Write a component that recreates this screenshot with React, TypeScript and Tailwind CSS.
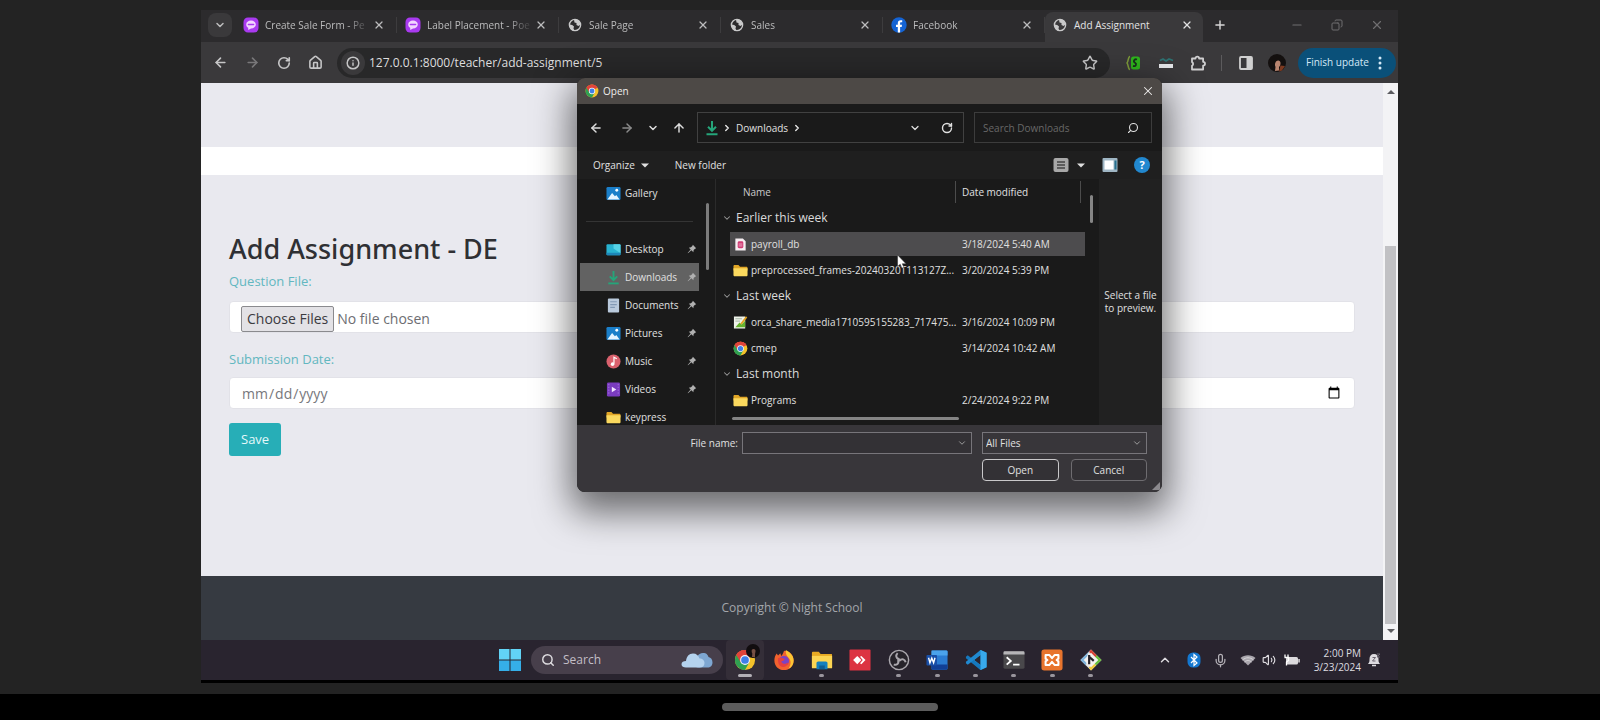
import React from "react";
import {
  ArrowLeft,
  ArrowRight,
  ArrowUp,
  ChevronDown,
  ChevronRight,
  ChevronUp,
  Copy,
  House,
  Info,
  Mic,
  Minus,
  Plus,
  RotateCw,
  Search,
  Star,
  Volume2,
  X,
} from "lucide-react";

type IconProps = { className?: string };

function ChromeIcon({ className }: IconProps) {
  return (
    <svg viewBox="0 0 24 24" className={className} aria-hidden="true">
      <circle cx="12" cy="12" r="11" fill="#f4c22b" />
      <path d="M12 12 L2.5 6.5 A11 11 0 0 1 21.5 6.5 Z" fill="#e0443a" />
      <path d="M2.5 6.5 A11 11 0 0 0 12 23 L16.6 14.6 L12 12 Z" fill="#2fa152" />
      <path d="M12 6.8 H21.6 A11 11 0 0 0 2.5 6.5 L7.4 14.6 Z" fill="#e0443a" />
      <circle cx="12" cy="12" r="5.4" fill="#f3f5fa" />
      <circle cx="12" cy="12" r="4.2" fill="#3f7fe8" />
    </svg>
  );
}

function ChatIcon({ className }: IconProps) {
  return (
    <svg viewBox="0 0 16 16" className={className} aria-hidden="true">
      <rect x="0.5" y="0.5" width="15" height="15" rx="4.5" fill="#a93af0" />
      <path d="M8 3.6c2.8 0 4.8 1.7 4.8 3.9S10.8 11.5 8 11.5L5.2 13v-2.2C3.9 10.1 3.2 8.9 3.2 7.5 3.2 5.3 5.2 3.6 8 3.6Z" fill="#f3d5ff" />
      <path d="M5.4 7.5h5.2" stroke="#a93af0" strokeWidth="1.4" strokeLinecap="round" />
    </svg>
  );
}

function GlobeIcon({ className }: IconProps) {
  return (
    <svg viewBox="0 0 16 16" className={className} aria-hidden="true">
      <circle cx="8" cy="8" r="5.6" fill="none" stroke="#c9c9ca" strokeWidth="1.4" />
      <path d="M2.500 7.500 5.200 8l1.800 1.500L6.500 11.500l.8 2C4.500 13.500 2.500 11 2.500 7.500Z" fill="#c9c9ca" />
      <path d="M7 2.500h3c2 1 3.300 2.800 3.500 5L11.500 9 9.500 8V6L7.500 5.500 7 2.500Z" fill="#c9c9ca" />
    </svg>
  );
}

function FacebookIcon({ className }: IconProps) {
  return (
    <svg viewBox="0 0 16 16" className={className} aria-hidden="true">
      <circle cx="8" cy="8" r="7.7" fill="#1463d3" />
      <path d="M6.8 15.6V10H5V7.8h1.8V6.2c0-2 1-3 2.9-3h1.5v2.1h-1c-.8 0-1.1.3-1.1 1v1.5H11L10.7 10H9.1v5.6Z" fill="#fff" />
    </svg>
  );
}

function DownloadIcon({ className }: IconProps) {
  return (
    <svg viewBox="0 0 16 16" className={className} fill="none" stroke="#25a57a" strokeWidth="2" aria-hidden="true">
      <path d="M8 1v9.5M4 6.800l4 4 4-4" />
      <path d="M2.5 14.3h11" />
    </svg>
  );
}

function FolderIcon({ className }: IconProps) {
  return (
    <svg viewBox="0 0 16 16" className={className} aria-hidden="true">
      <path d="M0.5 3.5c0-.8.5-1.3 1.3-1.3h4L7.5 4h6.7c.8 0 1.3.5 1.3 1.3V8h-15Z" fill="#e0a526" />
      <path d="M0.5 5.6h15v7.1c0 .8-.5 1.3-1.3 1.3H1.8c-.8 0-1.3-.5-1.3-1.3Z" fill="#fbd95e" />
    </svg>
  );
}

function PictureIcon({ className }: IconProps) {
  return (
    <svg viewBox="0 0 16 16" className={className} aria-hidden="true">
      <rect x="0.5" y="1" width="15" height="14" rx="1.5" fill="#1b7fc9" />
      <path d="M1.5 14.5 6.5 7.5l3 3.5 1.5-1.5 3.5 5Z" fill="#e6f4ff" />
      <circle cx="11.5" cy="4.5" r="1.5" fill="#fff" />
    </svg>
  );
}

function DesktopIcon({ className }: IconProps) {
  return (
    <svg viewBox="0 0 16 16" className={className} aria-hidden="true">
      <rect x="0.5" y="2.5" width="15" height="11.5" rx="1" fill="#28b3d1" />
      <path d="M8 2.5h6.5a1 1 0 0 1 1 1V12L8 7Z" fill="#56d3e6" />
      <path d="M0.5 11.5h15V13a1 1 0 0 1-1 1h-13a1 1 0 0 1-1-1Z" fill="#1d86b8" />
    </svg>
  );
}

function DocumentIcon({ className }: IconProps) {
  return (
    <svg viewBox="0 0 16 16" className={className} aria-hidden="true">
      <rect x="2" y="0.5" width="12" height="15" rx="1" fill="#b9c9dc" />
      <path d="M4.5 4h7M4.5 7h7M4.5 10h5" stroke="#8299b5" strokeWidth="1.2" />
    </svg>
  );
}

function MusicIcon({ className }: IconProps) {
  return (
    <svg viewBox="0 0 16 16" className={className} aria-hidden="true">
      <circle cx="8" cy="8" r="7.5" fill="#d9616d" />
      <path d="M8.5 10.5V3.5l3 1.5" fill="none" stroke="#fff" strokeWidth="1.3" />
      <circle cx="7" cy="10.8" r="1.9" fill="#fff" />
    </svg>
  );
}

function VideoIcon({ className }: IconProps) {
  return (
    <svg viewBox="0 0 16 16" className={className} aria-hidden="true">
      <rect x="1" y="0.5" width="14" height="15" rx="1.5" fill="#7a3bbf" />
      <path d="M3 2v12M13 2v12" stroke="#a676df" strokeWidth="1" strokeDasharray="1.5 1.5" />
      <path d="M6.2 5v6l4.8-3Z" fill="#f0e2ff" />
    </svg>
  );
}

function PinIcon({ className }: IconProps) {
  return (
    <svg viewBox="0 0 12 12" className={className} aria-hidden="true">
      <path d="M7 1 11 5 9.7 5.6 8 7.3 7.6 9.8 5.3 7.6 1.2 11.2.8 10.8 4.4 6.7 2.2 4.4 4.7 4 6.4 2.3Z" fill="#b0b0b0" />
    </svg>
  );
}

function DatabaseFileIcon({ className }: IconProps) {
  return (
    <svg viewBox="0 0 16 16" className={className} aria-hidden="true">
      <path d="M2.500 1.500h8l3 3v10h-11Z" fill="#f6eef2" />
      <rect x="5" y="4.500" width="6" height="7.500" rx="1.5" fill="#cf3b73" />
      <path d="M6 7.5h4M6 9.5h4" stroke="#f6c4d8" strokeWidth="0.8" />
    </svg>
  );
}

function ImageFileIcon({ className }: IconProps) {
  return (
    <svg viewBox="0 0 16 16" className={className} aria-hidden="true">
      <path d="M1 1.5h12v13H1Z" fill="#eff3ea" />
      <path d="M2.5 4h7M2.5 6.5h5" stroke="#9fb0a0" strokeWidth="1" />
      <path d="M2.5 13 7 8l2 2 4-4v7Z" fill="#65b32e" />
      <path d="m8.5 9.5 6-7.5" stroke="#e2a11d" strokeWidth="1.8" />
    </svg>
  );
}

function Caret({ className }: IconProps) {
  return (
    <svg viewBox="0 0 8 5" className={className} aria-hidden="true">
      <path d="M0 .5h8L4 4.5Z" fill="currentColor" />
    </svg>
  );
}

const tabs = [
  { title: "Create Sale Form - Pe", Icon: ChatIcon },
  { title: "Label Placement - Poe", Icon: ChatIcon },
  { title: "Sale Page", Icon: GlobeIcon },
  { title: "Sales", Icon: GlobeIcon },
  { title: "Facebook", Icon: FacebookIcon },
];

function TabBar() {
  return (
    <div className="flex h-8 items-center bg-[#2c2b2d] pb-0.5 text-[#bcbcbd]">
      <button aria-label="Search tabs" className="ml-[7px] mr-[3px] grid h-6 w-6 place-items-center rounded-lg bg-[#3a393b]">
        <ChevronDown className="h-3 w-3" strokeWidth={3} />
      </button>
      {tabs.map(({ title, Icon }) => (
        <div key={title} className="flex h-4 w-[162px] shrink-0 items-center border-r border-[#3d3c3e] pl-2 pr-[11px]">
          <Icon className="h-4 w-4 shrink-0" />
          <span className="ml-1.5 whitespace-nowrap text-[10px] leading-4 [mask-image:linear-gradient(to_right,black_80px,transparent_106px)]">
            {title}
          </span>
          <button aria-label={`Close ${title}`} className="ml-auto">
            <X className="h-3 w-3" strokeWidth={2.500} />
          </button>
        </div>
      ))}
      <div className="-mb-0.5 flex h-[30px] w-[158px] shrink-0 items-center self-end rounded-t-lg bg-[#3a393b] pb-1 pl-[7px] pr-2.5 text-[#e2e2e3]">
        <GlobeIcon className="h-4 w-4" />
        <span className="ml-1.5 whitespace-nowrap text-[10px] leading-4">Add Assignment</span>
        <button aria-label="Close Add Assignment" className="ml-auto">
          <X className="h-3 w-3" strokeWidth={2.500} />
        </button>
      </div>
      <button aria-label="New tab" className="ml-2.5 text-[#d6d6d6]">
        <Plus className="h-3.5 w-3.5" strokeWidth={2.500} />
      </button>
      <div className="ml-auto mr-3.5 flex gap-[26px] text-[#6f6e70]">
        <button aria-label="Minimize">
          <Minus className="h-3.5 w-3.5" />
        </button>
        <button aria-label="Restore">
          <Copy className="h-3 w-3.5 -scale-x-100" />
        </button>
        <button aria-label="Close window">
          <X className="h-3.5 w-3.5" />
        </button>
      </div>
    </div>
  );
}

function Toolbar() {
  return (
    <div className="flex h-[41px] items-center bg-[#3a393b] pl-3 pr-0.5 text-[#c6c6c7]">
      <div className="flex gap-[17px]">
        <button aria-label="Back"><ArrowLeft className="h-[15px] w-[15px]" strokeWidth={2.500} /></button>
        <button aria-label="Forward" className="text-[#79787a]"><ArrowRight className="h-[15px] w-[15px]" strokeWidth={2.500} /></button>
        <button aria-label="Reload"><RotateCw className="h-3.5 w-3.5" strokeWidth={2.800} /></button>
        <button aria-label="Home"><House className="h-[15px] w-[15px]" strokeWidth={2.500} /></button>
      </div>
      <div className="ml-3.5 flex h-[30px] min-w-0 flex-1 items-center rounded-full bg-[#282829] pl-1 pr-3">
        <span className="grid h-6 w-6 shrink-0 place-items-center rounded-full bg-[#3a393b]">
          <Info className="h-3.5 w-3.5" strokeWidth={2.500} />
        </span>
        <input
          aria-label="Address"
          defaultValue="127.0.0.1:8000/teacher/add-assignment/5"
          className="ml-1 min-w-0 flex-1 bg-transparent text-[12px] text-[#dededf] outline-none"
        />
        <Star className="h-4 w-4" strokeWidth={2.200} />
      </div>
      <div className="ml-4 flex items-center">
        <svg viewBox="0 0 16 16" className="h-4 w-4" aria-hidden="true">
          <path d="M4 1.5C2 1.5 2.5 6.5 1 8c1.5 1.5 1 6.5 3 6.5" fill="none" stroke="#7d9a3a" strokeWidth="1.5" />
          <rect x="5" y="1.5" width="9" height="13" rx="2.5" fill="#2eb51c" />
          <path d="M11 4.5c-3-1-4 2-2 3.2s1 4-2 3.3" fill="none" stroke="#17301a" strokeWidth="1.8" />
        </svg>
        <svg viewBox="0 0 16 16" className="ml-4 h-4 w-4" aria-hidden="true">
          <path d="M2 5.500 5 4l3 2 3-2 4 1.500" fill="none" stroke="#2d7272" strokeWidth="1.8" />
          <rect x="1" y="9" width="14" height="4" fill="#e5e7ea" />
        </svg>
        <svg viewBox="0 0 16 16" className="ml-4 h-4 w-4" fill="none" stroke="#cfcfd0" strokeWidth="1.800" strokeLinejoin="round" aria-hidden="true">
          <path d="M2 3.500h3.500a1.800 1.800 0 0 1 3.600 0h4v3.300a1.900 1.900 0 0 1 0 3.800v3.900H2v-3.800a2 2 0 0 0 0-3.600Z" />
        </svg>
        <span className="ml-[15px] h-4 w-px bg-[#5c5b5d]" />
        <svg viewBox="0 0 16 16" className="ml-4 h-4 w-4" aria-hidden="true">
          <rect x="2" y="2" width="12" height="12" rx="1" fill="none" stroke="#d0d0d0" strokeWidth="1.8" />
          <rect x="8.5" y="2" width="5.5" height="12" fill="#d0d0d0" />
        </svg>
        <svg viewBox="0 0 18 18" className="ml-3.5 h-[18px] w-[18px]" aria-hidden="true">
          <circle cx="9" cy="9" r="9" fill="#14100f" />
          <path d="M8 7.500c2-2 4.500-1 4.500 1.500 0 2-.5 3-1.500 4v3.500L7 17l.5-4C6.500 11 7 9 8 7.500Z" fill="#b98570" />
          <path d="M12.5 11.500 17 12 14 16.5 11 17.500Z" fill="#7e3a20" />
        </svg>
      </div>
      <button className="ml-3 flex h-[30px] w-[98px] shrink-0 items-center justify-between rounded-full bg-[#0a5079] pl-2 pr-3.5 text-[10px] text-[#d5e9f7]">
        <span className="whitespace-nowrap">Finish update</span>
        <svg viewBox="0 0 4 14" className="h-3.5 w-1" fill="currentColor" aria-hidden="true">
          <circle cx="2" cy="2" r="1.5" /><circle cx="2" cy="7" r="1.5" /><circle cx="2" cy="12" r="1.5" />
        </svg>
      </button>
    </div>
  );
}

function AssignmentPage() {
  return (
    <div className="flex h-[557px] bg-[#e9e9ef]">
      <div className="flex min-w-0 flex-1 flex-col">
        <div className="mt-16 h-7 bg-white" />
        <form className="px-7 pt-14" onSubmit={(e) => e.preventDefault()}>
          <h1 className="font-['Noto_Sans','Open_Sans',sans-serif] text-[27px] font-medium leading-9 text-[#2f3034]">Add Assignment - DE</h1>
          <label htmlFor="question" className="mt-1 block text-[13px] leading-5 text-[#62b7c0]">Question File:</label>
          <input
            id="question"
            type="file"
            multiple
            className="mt-2.5 block h-8 w-full rounded-sm border border-[#e2e2e8] bg-white pl-[11px] pt-1 text-[14px] leading-5 text-[#6d6d72] file:mr-[3px] file:h-[26px] file:rounded-xs file:border file:border-solid file:border-[#8a8a8e] file:bg-[#e3e2e6] file:px-[5px] file:text-[14px] file:text-[#3b3b3f]"
          />
          <label htmlFor="date" className="mt-4 block text-[13px] leading-5 text-[#62b7c0]">Submission Date:</label>
          <input
            id="date"
            type="date"
            className="mt-2 block h-8 w-full rounded-sm border border-[#e2e2e8] bg-white px-[11px] text-[14px] text-[#77777c]"
          />
          <button className="mt-3.5 h-[33px] rounded-[3px] bg-[#27aeb7] px-3 text-[13px] text-[#e4f8fa]">Save</button>
        </form>
        <footer className="mt-auto grid h-16 place-items-center bg-[#363a41] text-[12px] text-[#a3a6ab]">
          Copyright © Night School
        </footer>
      </div>
      <div className="flex w-[15px] flex-col items-center bg-[#f3f3f5] py-1.5 text-[#5c5c60]">
        <Caret className="h-1.5 w-2 rotate-180" />
        <div className="mt-auto h-[378px] w-[11px] bg-[#c1c1c4]" />
        <Caret className="mt-1 h-1.5 w-2" />
      </div>
    </div>
  );
}

const places = [
  { name: "Desktop", Icon: DesktopIcon, pinned: true },
  { name: "Downloads", Icon: DownloadIcon, pinned: true, active: true },
  { name: "Documents", Icon: DocumentIcon, pinned: true },
  { name: "Pictures", Icon: PictureIcon, pinned: true },
  { name: "Music", Icon: MusicIcon, pinned: true },
  { name: "Videos", Icon: VideoIcon, pinned: true },
  { name: "keypress", Icon: FolderIcon, pinned: false },
];

const groups = [
  {
    title: "Earlier this week",
    files: [
      { name: "payroll_db", date: "3/18/2024 5:40 AM", Icon: DatabaseFileIcon, active: true },
      { name: "preprocessed_frames-20240320T113127Z...", date: "3/20/2024 5:39 PM", Icon: FolderIcon },
    ],
  },
  {
    title: "Last week",
    files: [
      { name: "orca_share_media1710595155283_717475...", date: "3/16/2024 10:09 PM", Icon: ImageFileIcon },
      { name: "cmep", date: "3/14/2024 10:42 AM", Icon: ChromeIcon },
    ],
  },
  { title: "Last month", files: [{ name: "Programs", date: "2/24/2024 9:22 PM", Icon: FolderIcon }] },
];

function OpenDialog() {
  return (
    <div
      role="dialog"
      aria-label="Open"
      className="absolute left-[376px] top-[68px] w-[585px] overflow-hidden rounded-lg bg-[#1a1a1a] text-[10px] leading-[14px] text-[#e0e0e0] shadow-[0_14px_36px_6px_rgba(0,0,0,0.55)]"
    >
      <div className="flex h-[26px] items-center bg-[#4d4946] pl-2 pr-[7px] text-[#efedec]">
        <ChromeIcon className="h-3.5 w-3.5" />
        <span className="ml-1">Open</span>
        <button aria-label="Close" className="ml-auto"><X className="h-3.5 w-3.5" strokeWidth={1.800} /></button>
      </div>

      <div className="flex h-[47px] items-center pl-3 pr-2.5">
        <div className="flex w-[108px] items-center gap-[13px] text-[#dcdcdc]">
          <button aria-label="Back" className="mr-1"><ArrowLeft className="h-3.5 w-3.5" strokeWidth={2.500} /></button>
          <button aria-label="Forward" className="text-[#8b8b8b]"><ArrowRight className="h-3.5 w-3.5" strokeWidth={2.500} /></button>
          <button aria-label="Recent"><ChevronDown className="h-3 w-3" strokeWidth={3} /></button>
          <button aria-label="Up"><ArrowUp className="h-3.5 w-3.5" strokeWidth={2.500} /></button>
        </div>
        <div className="flex h-[31px] w-[267px] items-center border border-[#414141] pl-1.5 pr-2.5">
          <DownloadIcon className="h-4 w-4" />
          <ChevronRight className="ml-0.5 h-2.5 w-2.5" strokeWidth={3.500} />
          <span className="ml-1">Downloads</span>
          <ChevronRight className="ml-1 h-2.5 w-2.5" strokeWidth={3.500} />
          <button aria-label="Previous locations" className="ml-auto"><ChevronDown className="h-3 w-3" strokeWidth={2.500} /></button>
          <button aria-label="Refresh" className="ml-5"><RotateCw className="h-3 w-3" strokeWidth={2.800} /></button>
        </div>
        <div className="ml-2.5 flex h-[31px] min-w-0 flex-1 items-center border border-[#3c3c3c] px-2">
          <input aria-label="Search Downloads" placeholder="Search Downloads" className="min-w-0 flex-1 bg-transparent outline-none placeholder:text-[#686868]" />
          <Search className="mr-1 h-3 w-3 -scale-x-100" strokeWidth={2.200} />
        </div>
      </div>

      <div className="flex h-7 items-center bg-[#1f1f1f] px-4">
        <button className="flex items-center gap-1.5">Organize<Caret className="h-[5px] w-2" /></button>
        <button className="ml-[26px]">New folder</button>
        <button aria-label="Change view" className="ml-auto flex items-center gap-2">
          <svg viewBox="0 0 16 16" className="h-4 w-4" aria-hidden="true">
            <rect x="0.5" y="1" width="15" height="14" rx="2" fill="#a8a8a8" />
            <path d="M4 5h8M4 8h8M4 11h8" stroke="#444" strokeWidth="1.3" />
          </svg>
          <Caret className="h-[5px] w-2" />
        </button>
        <button aria-label="Preview pane" className="ml-[17px]">
          <svg viewBox="0 0 16 16" className="h-4 w-4" aria-hidden="true">
            <rect x="0.5" y="1" width="15" height="14" rx="1" fill="#9fb6c4" />
            <rect x="2.5" y="3.5" width="9" height="9" fill="#fff" />
            <path d="M13.5 3.5v9" stroke="#27708e" strokeWidth="2" />
          </svg>
        </button>
        <button aria-label="Help" className="-mr-1 ml-4 grid h-4 w-4 place-items-center rounded-full bg-[#2288cf] text-[11px] font-bold text-white">?</button>
      </div>

      <div className="flex h-[246px]">
        <div className="flex w-[139px] shrink-0 overflow-hidden border-r border-[#2b2b2b] pl-[3px]">
          <ul className="w-[119px]">
            <li className="flex h-7 items-center pl-[26px]"><PictureIcon className="mr-1 h-[15px] w-[15px]" />Gallery</li>
            <li className="mx-1.5 mb-[13px] mt-3.5 h-px bg-[#343434]" role="separator" />
            {places.map(({ name, Icon, pinned, active }) => (
              <li key={name} className={active ? "flex h-7 items-center bg-[#626262] pl-[26px] pr-0.5" : "flex h-7 items-center pl-[26px] pr-0.5"}>
                <Icon className="mr-1 h-[15px] w-[15px] shrink-0" />
                {name}
                {pinned && <PinIcon className="ml-auto h-2.5 w-2.5 shrink-0" />}
              </li>
            ))}
          </ul>
          <div className="ml-[7px] mt-6 h-[67px] w-[3px] rounded-full bg-[#7c7c7c]" />
        </div>

        <div className="flex min-w-0 flex-1 flex-col pl-1.5">
          <table className="w-[363px] table-fixed border-collapse">
            <colgroup>
              <col className="w-[233px]" />
              <col className="w-[130px]" />
            </colgroup>
            <thead>
              <tr className="h-[26px] text-left">
                <th className="py-0 pl-[21px] pr-0 font-normal text-[#cacaca]">Name</th>
                <th className="p-0 font-normal">
                  <div className="mr-1 h-[22px] border-x border-[#4c4c4c] pl-1.5 pt-1">Date modified</div>
                </th>
              </tr>
            </thead>
            {groups.map((group) => (
              <tbody key={group.title}>
                <tr className="h-[26px]">
                  <th colSpan={2} className="p-0 text-left text-[12px] font-normal leading-5 text-[#dadada]">
                    <span className="flex items-center gap-1"><ChevronDown className="h-2.5 w-2.5 text-[#9b9b9b]" strokeWidth={2.500} />{group.title}</span>
                  </th>
                </tr>
                {group.files.map(({ name, date, Icon, active }) => (
                  <tr key={name} className="h-[26px]">
                    <td className="p-0 pl-2">
                      <div className={active ? "flex h-6 items-center bg-[#4d4c4e] pl-[3px]" : "flex h-6 items-center pl-[3px]"}>
                        <Icon className="mr-[3px] h-[15px] w-[15px] shrink-0" />
                        <span className="whitespace-nowrap">{name}</span>
                      </div>
                    </td>
                    <td className="p-0">
                      <div className={active ? "flex h-6 items-center whitespace-nowrap bg-[#4d4c4e] pl-[7px]" : "flex h-6 items-center whitespace-nowrap pl-[7px]"}>{date}</div>
                    </td>
                  </tr>
                ))}
              </tbody>
            ))}
          </table>
          <div className="ml-2.5 mt-1 h-[3px] w-[227px] rounded-full bg-[#858585]" />
        </div>
        <div className="mr-1.5 mt-4 h-7 w-[3px] rounded-full bg-[#858585]" />
        <p className="flex w-[63px] shrink-0 items-center justify-center whitespace-nowrap bg-[#212121] text-center leading-[13px]">
          Select a file<br />to preview.
        </p>
      </div>

      <div className="grid h-[67px] grid-cols-[161px_230px_165px] content-start gap-x-1 gap-y-[5px] bg-[#38363a] pt-[7px]">
        <label htmlFor="filename" className="text-right leading-[22px]">File name:</label>
        <div className="flex h-[22px] items-center border border-[#77757a] bg-[#333135] pr-1">
          <input id="filename" className="min-w-0 flex-1 bg-transparent px-1 outline-none" />
          <ChevronDown className="h-2.5 w-2.5 text-[#b1b1b1]" />
        </div>
        <div className="ml-1.5 -mr-1.5 flex h-[22px] items-center border border-[#77757a] pr-1">
          <select aria-label="File type" className="min-w-0 flex-1 appearance-none bg-transparent pl-[3px] outline-none"><option>All Files</option></select>
          <ChevronDown className="h-2.5 w-2.5 text-[#b1b1b1]" />
        </div>
        <div className="col-start-3 -mr-1.5 ml-1.5 grid grid-cols-2 gap-3">
          <button className="h-[22px] rounded-sm border border-[#c9c8ca] bg-[#333135]">Open</button>
          <button className="h-[22px] rounded-sm border border-[#6e6c70] bg-[#333135]">Cancel</button>
        </div>
      </div>
      <svg viewBox="0 0 8 8" className="absolute bottom-0.5 right-0.5 h-2 w-2" aria-hidden="true">
        <path d="M8 0v8H0Z" fill="#8b898d" />
      </svg>
      <svg viewBox="0 0 12 18" className="absolute left-[319px] top-[176px] h-4 w-3" aria-hidden="true">
        <path d="M1 1v13l3-2.5 2 4.5 2.2-1L6.3 11H10.5Z" fill="#fff" stroke="#333" strokeWidth="0.6" />
      </svg>
    </div>
  );
}

const apps: { name: string; running: boolean; art: React.ReactNode }[] = [
  {
    name: "Firefox",
    running: false,
    art: (
      <>
        <path d="M12 2c6 0 10.5 4.5 10.5 10.5S18 23 12 23 1.5 18.5 1.5 12.5c0-3 1-5.5 2.5-7.5l1.5 2L8 4.5l1 3c1.5-1 2-3 3-5.5Z" fill="#f2622e" />
        <path d="M14 1c5 3 8.5 6 8.5 11.5 0 4-2 7.5-5.5 9 3-5 3-9-.5-12.5C14.5 7 13.5 4 14 1Z" fill="#fcc634" />
        <circle cx="12" cy="13" r="5.5" fill="#7b43c4" />
        <path d="M5.5 10c3-1 5 0 7.5 1-1 2-2.5 2-4 2.5 1 3 5 3.5 8 1-1 4-4 5.5-7 5-3-1-5-4-4.5-9.5Z" fill="#e5403f" />
      </>
    ),
  },
  {
    name: "File Explorer",
    running: true,
    art: (
      <>
        <path d="M1 4.5C1 3.5 1.5 3 2.5 3h6l2 2.5H22c.8 0 1 .5 1 1.5v13H1Z" fill="#e8aa24" />
        <path d="M1 7.5h22V21H1Z" fill="#fcd553" />
        <path d="M6 15.5c0-1.2.6-2 2-2h8c1.4 0 2 .8 2 2V22H6Z" fill="#1580bd" />
        <path d="M9 18h6v4H9Z" fill="#0f5d91" />
      </>
    ),
  },
  {
    name: "AnyDesk",
    running: false,
    art: (
      <>
        <rect x="0.5" y="0.5" width="23" height="23" rx="1" fill="#dc3342" />
        <path d="m4.500 12 4.500-4.500L13.500 12 9 16.500Z" fill="#fff" />
        <path d="m12 8.500 1.500-1 4.500 4.500-4.500 4.500-1.500-1 3-3.500Z" fill="#fff" />
      </>
    ),
  },
  {
    name: "OBS Studio",
    running: true,
    art: (
      <g fill="none" stroke="#aaa7ad" strokeWidth="1.6">
        <circle cx="12" cy="12" r="10.5" fill="#26232a" />
        {[0, 120, 240].map((angle) => (
          <path key={angle} d="M12 11c-3.200-.8-4-4-1.500-6.500" strokeWidth="2.200" transform={`rotate(${angle} 12 12)`} />
        ))}
        <circle cx="12" cy="12" r="1.2" fill="#aaa7ad" />
      </g>
    ),
  },
  {
    name: "Word",
    running: true,
    art: (
      <>
        <rect x="6" y="1.5" width="17.5" height="21" rx="1.5" fill="#2b7cd3" />
        <path d="M6 1.5h16a1.5 1.5 0 0 1 1.5 1.5v4H6Z" fill="#4ba3ec" />
        <path d="M6 17h17.5v4a1.5 1.5 0 0 1-1.5 1.5H6Z" fill="#113f96" />
        <rect x="0.5" y="6.5" width="11.5" height="11.5" rx="1" fill="#184fa8" />
        <path d="m2.8 9.5 1.5 5.5 2-5 2 5 1.5-5.5" fill="none" stroke="#fff" strokeWidth="1.5" />
      </>
    ),
  },
  {
    name: "Visual Studio Code",
    running: true,
    art: (
      <>
        <path d="M17 1 23.5 4v16L17 23 6 12.5Z" fill="#2497dc" />
        <path d="M17 6.5v11L10 12Z" fill="#29242f" />
        <path d="m1 8.5 2-1.7L18 18.5 17 23 1 10Z" fill="#1578bd" />
        <path d="m1 15.5 2 1.7L18 5.5 17 1 1 14Z" fill="#2089d0" />
        <path d="M17 1 23.5 4v16L17 23Z" fill="#38a9ec" />
      </>
    ),
  },
  {
    name: "Terminal",
    running: true,
    art: (
      <>
        <rect x="0.5" y="2.5" width="23" height="19" rx="1.5" fill="#49484b" />
        <path d="M.5 4A1.5 1.5 0 0 1 2 2.5h20A1.5 1.5 0 0 1 23.5 4v2H.5Z" fill="#b6b5b8" />
        <path d="m4 9 4.5 4L4 17M11 17h7" fill="none" stroke="#fff" strokeWidth="2" />
      </>
    ),
  },
  {
    name: "XAMPP",
    running: true,
    art: (
      <>
        <rect x="0.5" y="0.5" width="23" height="23" rx="3" fill="#e8742d" />
        <path d="M5 6.5h4L12 10l3-3.5h4v4L17 12l2 1.5v4h-4L12 14l-3 3.5H5v-4L7 12l-2-1.5Z" fill="none" stroke="#fff" strokeWidth="2.2" strokeLinejoin="round" />
      </>
    ),
  },
  {
    name: "Git",
    running: true,
    art: (
      <>
        <path d="M12 .5 23.5 12 12 23.5.5 12Z" fill="#ece9e4" />
        <path d="M12 .5 .5 12l6 6 2-13Z" fill="#7fb4dc" />
        <path d="M12 .5 19 7.500l-3 5L10 3Z" fill="#d84035" />
        <path d="m18 6.500 5.500 5.500-6 6-3-4Z" fill="#68bf3c" />
        <path d="m12 23.5 5.500-5.500-3-3-5 5.500Z" fill="#efca3b" />
        <path d="m12 4 8 8-8 8-8-8Z" fill="#f4f2f0" />
        <path d="M10 6.500v10M10 8.500l5 4.500" stroke="#252229" strokeWidth="2.400" />
      </>
    ),
  },
];

function Taskbar() {
  return (
    <div className="grid h-10 grid-cols-[1fr_auto_1fr] items-center bg-[#29242f] text-[#dedce0]">
      <div />
      <div className="flex items-center pl-2.5">
        <button aria-label="Start">
          <svg viewBox="0 0 22 22" className="h-[22px] w-[22px]" aria-hidden="true">
            <path d="M0 0h10.5v10.5H0ZM11.5 0H22v10.5H11.5Z" fill="#62d3f6" />
            <path d="M0 11.5h10.5V22H0ZM11.5 11.5H22V22H11.5Z" fill="#35afe9" />
          </svg>
        </button>
        <div className="ml-2.5 flex h-7 w-[192px] items-center rounded-full bg-[#473f4b] pl-2.5 pr-2.5">
          <Search className="h-3.5 w-3.5 shrink-0" strokeWidth={2.500} />
          <input aria-label="Search" placeholder="Search" className="ml-2 min-w-0 flex-1 bg-transparent text-[12px] outline-none placeholder:text-[#c3bec6]" />
          <svg viewBox="0 0 32 16" className="h-4 w-8 shrink-0" aria-hidden="true">
            <path d="M17 15.5c-2 0-3-1.5-3-3.5 0-6 3-11 8-11 3.5 0 4.5 1.5 5.5 4 2.5.5 4 2.5 4 5.500 0 3-2 5-5 5Z" fill="#7ea7d2" />
            <path d="M5 15.5c-2.5 0-4.5-1-4.5-3.2C.5 10 2.5 9 5 9c.5-4.5 3-7.5 7-7.5 3.5 0 5.5 2 6.5 5 3 0 5 2 5 4.5 0 3-2 4.5-5 4.5Z" fill="#b4d2ee" />
          </svg>
        </div>
        <div className="ml-[3px] grid h-10 w-[384px] grid-cols-10">
          <button aria-label="Chrome" className="relative flex flex-col items-center rounded-sm bg-[#342e38] pt-[9px]">
            <ChromeIcon className="h-[22px] w-[22px]" />
            <svg viewBox="0 0 14 14" className="absolute right-1 top-1 h-3.5 w-3.5" aria-hidden="true">
              <circle cx="7" cy="7" r="7" fill="#110d0f" />
              <path d="M6 5.500c2-1.500 4 0 3.500 2L9 10v3H6l.3-3.500C5.500 8 5.500 6.500 6 5.500Z" fill="#765044" />
            </svg>
            <span className="mt-[3px] h-[3px] w-3.5 rounded-full bg-[#b3b0b6]" />
          </button>
          {apps.map(({ name, running, art }) => (
            <button key={name} aria-label={name} className="flex flex-col items-center pt-[9px]">
              <svg viewBox="0 0 24 24" className="h-[22px] w-[22px]" aria-hidden="true">{art}</svg>
              {running && <span className="mt-[3px] h-[3px] w-[5px] rounded-full bg-[#99959d]" />}
            </button>
          ))}
        </div>
      </div>
      <div className="flex items-center justify-end pr-[17px]">
        <ChevronUp className="h-3.5 w-3.5" strokeWidth={2.500} />
        <svg viewBox="0 0 14 16" className="ml-[15px] h-4 w-3.5" aria-hidden="true">
          <rect x="0.5" y="0.5" width="13" height="15" rx="5.5" fill="#1377d0" />
          <path d="m4 5 6 6-3 2.5v-11L10 5l-6 6" fill="none" stroke="#fff" strokeWidth="1.2" />
        </svg>
        <Mic className="ml-3 h-[15px] w-[15px] text-[#b5b2b8]" />
        <svg viewBox="0 0 16 12" className="ml-3 h-3 w-4" aria-hidden="true">
          <path d="M8 11.5.5 4C4.5.2 11.5.2 15.5 4Z" fill="#a9a6ad" />
          <path d="M2.5 6c3.5-3 7.5-3 11 0M4.5 8c2.5-2 4.5-2 7 0" fill="none" stroke="#d8d6da" strokeWidth="1" />
        </svg>
        <Volume2 className="ml-1.5 h-3.5 w-3.5" />
        <svg viewBox="0 0 16 12" className="ml-2 h-3 w-4" aria-hidden="true">
          <rect x="2" y="3" width="12" height="7.5" rx="1.5" fill="#dcdadd" />
          <rect x="14.3" y="5" width="1.5" height="3.5" fill="#dcdadd" />
          <path d="M1 .5v3M4 .5v3M.5 3.5h4v3l-2 1.5v3.5" fill="none" stroke="#fff" strokeWidth="1.3" />
        </svg>
        <div className="ml-3.5 text-right text-[10px] leading-[14px]">2:00 PM<br />3/23/2024</div>
        <svg viewBox="0 0 14 14" className="ml-1.5 h-3.5 w-3.5" aria-hidden="true">
          <path d="M1 11c1.5-1.5 1.5-3 1.5-5C2.5 3 4 1 7 1s4.5 2 4.5 5c0 2 0 3.5 1.5 5Z" fill="#dddbe0" />
          <path d="M5 12.5h4" stroke="#dddbe0" strokeWidth="1.5" />
          <path d="M5.5 4.5h3l-3 3.5h3M10 1h3l-3 3h3" fill="none" stroke="#69636f" strokeWidth="1" />
        </svg>
      </div>
    </div>
  );
}

export default function App() {
  return (
    <div className="flex min-h-screen flex-col bg-[#232323] font-['Open_Sans','Noto_Sans',sans-serif]">
      <main className="pb-[11px] pl-[201px] pr-[202px] pt-2.5">
        <div className="relative border-b-[3px] border-black">
          <TabBar />
          <Toolbar />
          <AssignmentPage />
          <Taskbar />
          <OpenDialog />
        </div>
      </main>
      <div className="flex flex-1 justify-center bg-black pl-[60px] pt-[9px]">
        <div className="-ml-[1px] h-2 w-[216px] rounded-full bg-[#5c5c5c]" />
      </div>
    </div>
  );
}
